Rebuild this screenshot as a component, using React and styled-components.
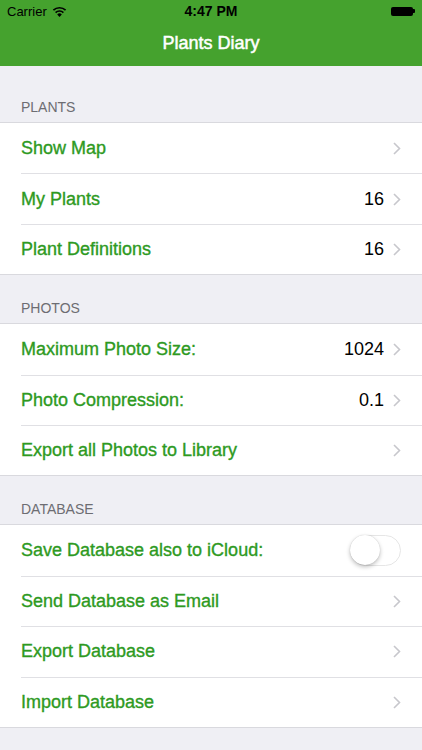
import React from 'react';
import styled, { createGlobalStyle } from 'styled-components';

const Global = createGlobalStyle`
  body {
    margin: 0;
    background: #efeff4;
    font-family: "Liberation Sans", Arial, sans-serif;
  }
`

const Screen = styled.div`
  width: 422px;
  height: 750px;
  overflow: hidden;
  background: #efeff4;
`

const Header = styled.header`
  background: #45a22e;
  height: 66px;
  display: flex;
  flex-direction: column;
`

const StatusBar = styled.div`
  height: 22px;
  display: grid;
  grid-template-columns: 1fr auto 1fr;
  align-items: center;
  padding: 0 7px;
  color: #000;
  font-size: 13px;
`

const Carrier = styled.div`
  display: flex;
  align-items: center;
  gap: 5px;
`

const Clock = styled.div`
  font-weight: bold;
  font-size: 14px;
`

const Battery = styled.div`
  justify-self: end;
  display: flex;
  align-items: center;
`

const BatteryBody = styled.div`
  width: 22px;
  height: 9px;
  background: #000;
  border-radius: 2px;
`

const BatteryTip = styled.div`
  width: 2px;
  height: 4px;
  background: #000;
  border-radius: 0 1px 1px 0;
`

const NavBar = styled.div`
  flex: 1;
  display: flex;
  align-items: center;
  justify-content: center;
  color: #fff;
  font-size: 18px;
  -webkit-text-stroke: 0.5px #fff;
  padding-bottom: 2px;
`

const SectionTitle = styled.div`
  color: #6d6d72;
  font-size: 14px;
  padding: ${p => (p.first ? '33px' : '25px')} 21px 7px;
`

const Group = styled.div`
  background: #fff;
  border-top: 1px solid #d9d9de;
  border-bottom: 1px solid #d9d9de;
`

const Row = styled.div`
  height: 50.4px;
  display: flex;
  align-items: center;
  padding-left: 21px;
  & + & > div {
    border-top: 1px solid #e0e0e4;
  }
`

const RowInner = styled.div`
  flex: 1;
  height: 100%;
  display: flex;
  align-items: center;
  padding-right: 21px;
  box-sizing: border-box;
`

const Label = styled.span`
  flex: 1;
  color: #2e9a1f;
  font-size: 18px;
  -webkit-text-stroke: 0.35px #2e9a1f;
`

const Value = styled.span`
  color: #000;
  font-size: 18px;
  margin-right: 9px;
`

const Switch = styled.div`
  width: 51px;
  height: 31px;
  border-radius: 16px;
  border: 1.5px solid #e6e6e6;
  box-sizing: border-box;
  background: #fff;
  position: relative;
`

const Knob = styled.div`
  position: absolute;
  left: -1px;
  top: -1px;
  width: 30px;
  height: 30px;
  border-radius: 50%;
  background: #fff;
  box-shadow: 0 2px 4px rgba(0, 0, 0, 0.25), 0 0 1px rgba(0, 0, 0, 0.2);
`

const Wifi = () => (
  <svg width="15" height="11" viewBox="0 0 15 11">
    <path d="M7.5 11 L5.2 8.4 A3.4 3.4 0 0 1 9.8 8.4 Z" fill="#000" />
    <path d="M3.6 6.6 A5.6 5.6 0 0 1 11.4 6.6" stroke="#000" strokeWidth="1.7" fill="none" />
    <path d="M1.4 4.2 A8.8 8.8 0 0 1 13.6 4.2" stroke="#000" strokeWidth="1.7" fill="none" />
  </svg>
)

const Chevron = () => (
  <svg width="8" height="13" viewBox="0 0 8 13">
    <path d="M1 1 L6.5 6.5 L1 12" stroke="#c7c7cc" strokeWidth="1.6" fill="none" />
  </svg>
)

const sections = [
  {
    title: 'PLANTS',
    rows: [
      { label: 'Show Map' },
      { label: 'My Plants', value: '16' },
      { label: 'Plant Definitions', value: '16' },
    ],
  },
  {
    title: 'PHOTOS',
    rows: [
      { label: 'Maximum Photo Size:', value: '1024' },
      { label: 'Photo Compression:', value: '0.1' },
      { label: 'Export all Photos to Library' },
    ],
  },
  {
    title: 'DATABASE',
    rows: [
      { label: 'Save Database also to iCloud:', toggle: true },
      { label: 'Send Database as Email' },
      { label: 'Export Database' },
      { label: 'Import Database' },
    ],
  },
]

export default function App() {
  return (
    <Screen>
      <Global />
      <Header>
        <StatusBar>
          <Carrier>Carrier <Wifi /></Carrier>
          <Clock>4:47 PM</Clock>
          <Battery><BatteryBody /><BatteryTip /></Battery>
        </StatusBar>
        <NavBar>Plants Diary</NavBar>
      </Header>
      {sections.map((s, i) => (
        <div key={s.title}>
          <SectionTitle first={i === 0}>{s.title}</SectionTitle>
          <Group>
            {s.rows.map(r => (
              <Row key={r.label}>
                <RowInner>
                  <Label>{r.label}</Label>
                  {r.value && <Value>{r.value}</Value>}
                  {r.toggle ? (
                    <Switch><Knob /></Switch>
                  ) : (
                    <Chevron />
                  )}
                </RowInner>
              </Row>
            ))}
          </Group>
        </div>
      ))}
    </Screen>
  );
}
